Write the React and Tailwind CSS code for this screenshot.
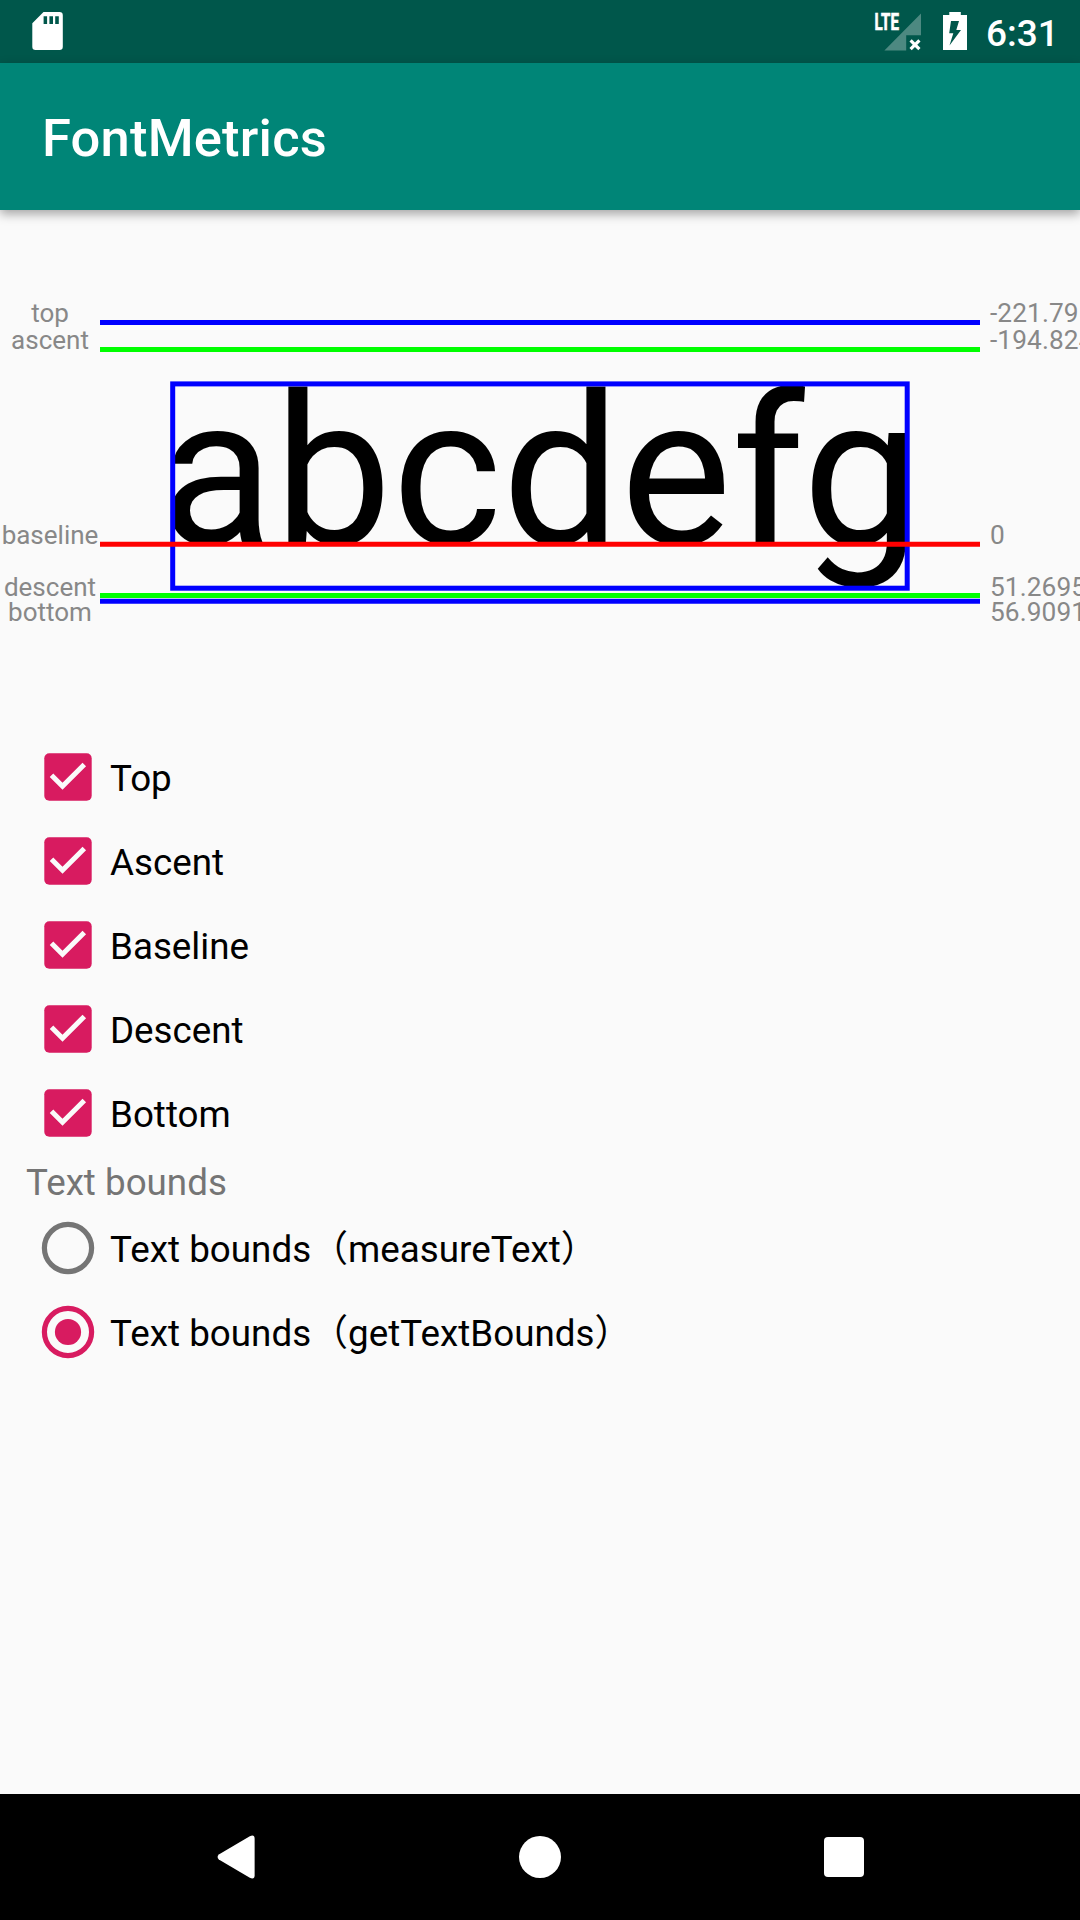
import React from "react";

const metrics = [
  { name: "top", value: "-221.79199", color: "#0000ff", y: 322.5, textY: 322 },
  { name: "ascent", value: "-194.82422", color: "#00ff00", y: 349.5, textY: 349 },
  { name: "baseline", value: "0", color: "#ff0000", y: 544.3, textY: 544 },
  { name: "descent", value: "51.26953", color: "#00ff00", y: 595.5, textY: 595.6 },
  { name: "bottom", value: "56.90918", color: "#0000ff", y: 601.2, textY: 620.6 },
];

const options = ["Top", "Ascent", "Baseline", "Descent", "Bottom"];

function StatusBar() {
  return (
    <div className="flex h-[63px] shrink-0 items-center bg-[#00574b] pl-[32px] pr-[24px] text-white">
      <svg width="31" height="38" viewBox="0 0 31 38" className="mb-px">
        <path
          fillRule="evenodd"
          fill="#fff"
          d="M11.5 0H27.5A3.3 3.3 0 0 1 30.8 3.3V34.7A3.3 3.3 0 0 1 27.5 38H3.6A3.3 3.3 0 0 1 .3 34.7V11.2ZM11.6 4.2V12H15.1V4.2ZM17.4 4.2V12H21V4.2ZM23.2 4.2V12H26.8V4.2Z"
        />
      </svg>
      <div className="grow" />
      <svg width="48" height="40" viewBox="0 0 48 40" className="mr-[21px] overflow-visible">
        <path d="M47 1.6V23.3H32.2V38.4H10.4Z" fill="#fff" fillOpacity="0.3" />
        <path d="M36.6 28.4L45.4 37.2M45.4 28.4L36.6 37.2" stroke="#fff" strokeWidth="3.2" />
        <text
          x="0"
          y="18.3"
          fontFamily="Roboto"
          fontWeight="700"
          fontSize="23"
          fill="#fff"
          stroke="#fff"
          strokeWidth="0.7"
          textLength="40.5"
          lengthAdjust="spacingAndGlyphs"
          transform="translate(0.6 0) scale(0.6 1)"
        >
          LTE
        </text>
      </svg>
      <svg width="24" height="38" viewBox="0 0 24 38" className="mb-px mr-[20px]">
        <path
          fillRule="evenodd"
          fill="#fff"
          d="M6.3 0H17.8V3H24V38H0V3H6.3ZM8 9L6.2 21.3H10.3L6.5 33.5L18 18H13.3L16 9Z"
        />
      </svg>
      <div className="relative left-[-1px] top-[2px] w-[69px] text-[37px] font-medium leading-none">6:31</div>
    </div>
  );
}

function MetricsChart() {
  return (
    <svg
      width="1080"
      height="525"
      viewBox="0 210 1080 525"
      className="block shrink-0 overflow-hidden"
      fontFamily="Roboto"
    >
      <text x="540" y="544.3" fontSize="210" textAnchor="middle" fill="#000">
        abcdefg
      </text>
      <rect x="172.7" y="383.9" width="734.5" height="204.3" fill="none" stroke="#0000ff" strokeWidth="5" />
      {metrics.map((m) => (
        <g key={m.name}>
          <line x1="100" x2="980" y1={m.y} y2={m.y} stroke={m.color} strokeWidth="5" />
          <text x="50" y={m.textY} fontSize="26" textAnchor="middle" fill="#888888">
            {m.name}
          </text>
          <text x="990" y={m.textY} fontSize="26.25" letterSpacing="0.1" fill="#888888">
            {m.value}
          </text>
        </g>
      ))}
    </svg>
  );
}

function CheckRow({ label }) {
  return (
    <div className="flex h-[84px] items-center pl-[44px]">
      <svg width="48" height="48" viewBox="0 0 48 48">
        <rect x=".3" y=".3" width="47.4" height="47.4" rx="5" fill="#d81b60" />
        <path d="M7.5 22.3L18.5 33.2L40.3 11.4" fill="none" stroke="#fafafa" strokeWidth="5" />
      </svg>
      <span className="ml-[18px] pt-[4px]">{label}</span>
    </div>
  );
}

function RadioRow({ label, selected }) {
  const color = selected ? "#d81b60" : "#757575";
  return (
    <div className="flex h-[84px] items-center pl-[41px]">
      <svg width="54" height="54" viewBox="0 0 54 54">
        <circle cx="27" cy="27" r="23.6" fill="none" stroke={color} strokeWidth="5.2" />
        {selected && <circle cx="27" cy="27" r="13.1" fill={color} />}
      </svg>
      <span className="ml-[15px] whitespace-nowrap pt-[4px] tracking-[0.03px]">{label}</span>
    </div>
  );
}

function NavBar() {
  return (
    <div className="flex h-[126px] shrink-0 items-center justify-between bg-black pl-[216px] pr-[216px]">
      <svg width="40" height="44" viewBox="0 0 40 44">
        <path
          fill="#fff"
          d="M2.8 19.5L33.8 1.2Q38.6 -.8 38.6 3.6V40.4Q38.6 44.8 33.8 42.8L2.8 24.5Q.4 22 2.8 19.5Z"
        />
      </svg>
      <div className="size-[42px] rounded-full bg-white" />
      <div className="size-[40px] rounded-[4px] bg-white" />
    </div>
  );
}

export default function App() {
  return (
    <div className="flex h-[1920px] w-[1080px] flex-col overflow-hidden bg-[#fafafa] font-['Roboto','Noto_Sans_CJK_JP',sans-serif]">
      <StatusBar />
      <header className="z-10 flex h-[147px] shrink-0 items-center bg-[#008577] pl-[42px] shadow-[0_4px_10px_rgba(0,0,0,0.35)]">
        <h1 className="pt-[4px] text-[52.5px] font-medium leading-none tracking-[0.2px] text-white">FontMetrics</h1>
      </header>
      <MetricsChart />
      <main className="grow text-[36.75px] leading-[50px] text-black">
        {options.map((o) => (
          <CheckRow key={o} label={o} />
        ))}
        <div className="h-[51px] pl-[26px] pt-[3px] text-[#757575]">Text bounds</div>
        <RadioRow label="Text bounds（measureText）" />
        <RadioRow label="Text bounds（getTextBounds）" selected />
      </main>
      <NavBar />
    </div>
  );
}
